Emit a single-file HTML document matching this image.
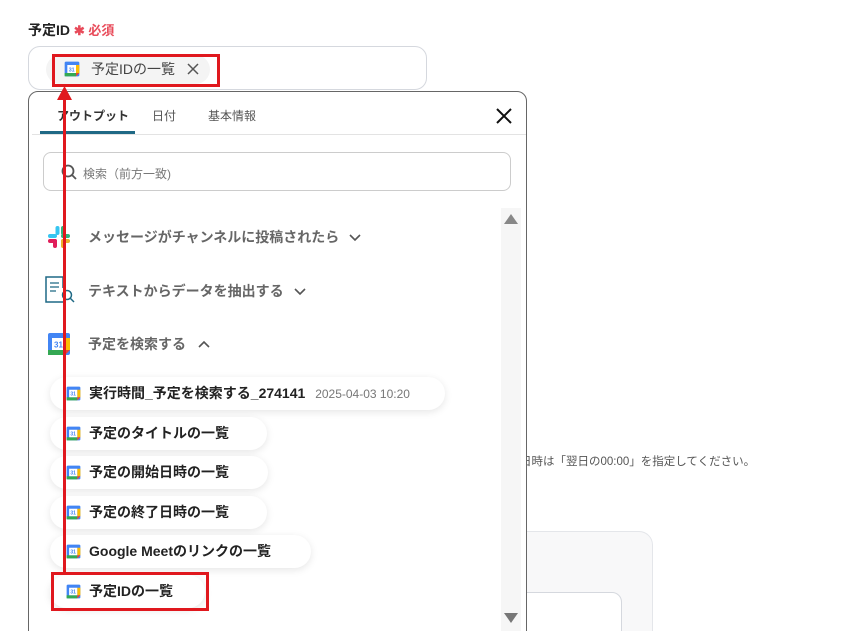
<!DOCTYPE html>
<html><head><meta charset="utf-8"><style>
*{box-sizing:border-box;margin:0;padding:0}
html,body{width:846px;height:631px;overflow:hidden}
body{background:#fff;font-family:"Liberation Sans","Noto Sans CJK JP",sans-serif;position:relative;color:#333}
.a{position:absolute}
.t{white-space:nowrap}
.pill{position:absolute;left:50px;height:33px;border-radius:17px;background:#fff;box-shadow:0 2px 8px rgba(0,0,0,0.10);font-size:14px;font-weight:bold;color:#222;line-height:33px;padding-left:39px;white-space:nowrap}
.grp{position:absolute;left:88px;font-size:14px;color:#666;font-weight:bold;white-space:nowrap}
.grp svg{margin-left:10px;vertical-align:middle}
</style></head><body>
<svg width="0" height="0" style="position:absolute"><defs>
<symbol id="cal" viewBox="0 0 24 24">
<rect x="1" y="1" width="22" height="22" rx="2" fill="#4285f4"/>
<rect x="1" y="18" width="17" height="5" fill="#34a853"/>
<rect x="18" y="6" width="5" height="12" fill="#fbbc04"/>
<polygon points="18,18 23,18 18,23" fill="#ea4335"/>
<rect x="5" y="6" width="13" height="12" fill="#fff"/>
<text x="11.5" y="15.5" font-size="8" fill="#4285f4" text-anchor="middle" font-family="Liberation Sans" font-weight="bold">31</text>
</symbol></defs></svg>

<div class="a t" style="left:28px;top:20px;font-size:14px;font-weight:bold;color:#222">予定ID <span style="color:#e84b5a;font-size:13px">✱ 必須</span></div>
<div class="a" style="left:28px;top:46px;width:399px;height:44px;border:1px solid #d5d8de;border-radius:12px"></div>
<div class="a" style="left:46px;top:55px;width:164px;height:29px;border-radius:15px;background:#f4f4f4"></div>
<svg class="a" style="left:64px;top:61px" width="16" height="16"><use href="#cal"/></svg>
<div class="a t" style="left:91px;top:59px;font-size:14px;color:#444">予定IDの一覧</div>
<svg class="a" style="left:186px;top:62px" width="14" height="14"><path d="M2 2L12 12M12 2L2 12" stroke="#555" stroke-width="1.5"/></svg>

<div class="a t" style="left:497px;top:453px;font-size:11.5px;color:#555">終了日時は「翌日の00:00」を指定してください。</div>
<div class="a" style="left:400px;top:531px;width:253px;height:130px;border:1px solid #e4e6ea;border-radius:14px;background:#f8f8f9"></div>
<div class="a" style="left:420px;top:592px;width:202px;height:60px;border:1px solid #d5d8de;border-radius:10px;background:#fff"></div>

<div class="a" style="left:28px;top:91px;width:499px;height:560px;border:1px solid #666;border-radius:10px;background:#fff;overflow:hidden">
 <div class="a t" style="left:28px;top:15px;font-size:12px;font-weight:bold;color:#333">アウトプット</div>
 <div class="a t" style="left:123px;top:15px;font-size:12px;color:#555">日付</div>
 <div class="a t" style="left:179px;top:15px;font-size:12px;color:#555">基本情報</div>
 <div class="a" style="left:11px;top:39px;width:95px;height:3px;background:#1f6985"></div>
 <div class="a" style="left:3px;top:42px;width:495px;height:1px;background:#e3e3e3"></div>
 <svg class="a" style="left:466px;top:15px" width="18" height="18"><path d="M2 2L16 16M16 2L2 16" stroke="#111" stroke-width="2"/></svg>
 <div class="a" style="left:14px;top:60px;width:468px;height:39px;border:1px solid #ccc;border-radius:8px"></div>
 <svg class="a" style="left:32px;top:72px" width="16" height="16"><circle cx="7" cy="7" r="5.5" fill="none" stroke="#555" stroke-width="1.8"/><path d="M11 11L15 15" stroke="#555" stroke-width="1.8"/></svg>
 <div class="a t" style="left:54px;top:73px;font-size:12px;color:#777">検索（前方一致)</div>
 <div class="a" style="left:472px;top:116px;width:20px;height:450px;background:#f6f6f6"></div>
 <svg class="a" style="left:475px;top:121px" width="14" height="12"><polygon points="7,1 14,11 0,11" fill="#888"/></svg>
 <svg class="a" style="left:475px;top:520px" width="14" height="12"><polygon points="0,1 14,1 7,11" fill="#777"/></svg>
</div>

<svg class="a" style="left:47px;top:225px" width="24" height="24" viewBox="0 0 24 24">
<rect x="1" y="9" width="9" height="4" rx="2" fill="#36c5f0"/><rect x="8.5" y="1" width="4" height="9" rx="2" fill="#36c5f0"/>
<rect x="14" y="1" width="4" height="9" rx="2" fill="#2eb67d"/><rect x="14" y="9" width="9" height="4" rx="2" fill="#2eb67d"/>
<rect x="14" y="14" width="9" height="4" rx="2" fill="#ecb22e"/><rect x="14" y="14" width="4" height="9" rx="2" fill="#ecb22e"/>
<rect x="1" y="14" width="9" height="4" rx="2" fill="#e01e5a"/><rect x="6" y="14" width="4" height="9" rx="2" fill="#e01e5a"/>
</svg>
<div class="grp" style="top:227px">メッセージがチャンネルに投稿されたら<svg width="12" height="10"><path d="M1 2L6 7L11 2" fill="none" stroke="#555" stroke-width="1.6"/></svg></div>

<svg class="a" style="left:45px;top:276px" width="30" height="28" viewBox="0 0 30 28"><path d="M18 26H1V1H18V12" fill="none" stroke="#1f6985" stroke-width="1.5"/><path d="M5 7H14M5 11H14M5 15H11" stroke="#1f6985" stroke-width="1.3"/><circle cx="22" cy="19" r="4.5" fill="#fff" stroke="#1f6985" stroke-width="1.5"/><path d="M25 22L29 26" stroke="#1f6985" stroke-width="1.5"/></svg>
<div class="grp" style="top:281px">テキストからデータを抽出する<svg width="12" height="10"><path d="M1 2L6 7L11 2" fill="none" stroke="#555" stroke-width="1.6"/></svg></div>

<svg class="a" style="left:47px;top:332px" width="24" height="24"><use href="#cal"/></svg>
<div class="grp" style="top:334px">予定を検索する</div>
<svg class="a" style="left:198px;top:339px" width="12" height="10"><path d="M1 8L6 3L11 8" fill="none" stroke="#555" stroke-width="1.6"/></svg>

<div class="pill" style="top:377px;width:395px">実行時間_予定を検索する_274141 <span style="font-weight:normal;color:#777;font-size:12px;margin-left:6px">2025-04-03 10:20</span></div>
<div class="pill" style="top:417px;width:217px">予定のタイトルの一覧</div>
<div class="pill" style="top:456px;width:218px">予定の開始日時の一覧</div>
<div class="pill" style="top:496px;width:217px">予定の終了日時の一覧</div>
<div class="pill" style="top:535px;width:261px">Google Meetのリンクの一覧</div>
<div class="pill" style="top:575px;width:155px">予定IDの一覧</div>
<svg class="a" style="left:66px;top:386px" width="15" height="15"><use href="#cal"/></svg>
<svg class="a" style="left:66px;top:426px" width="15" height="15"><use href="#cal"/></svg>
<svg class="a" style="left:66px;top:465px" width="15" height="15"><use href="#cal"/></svg>
<svg class="a" style="left:66px;top:505px" width="15" height="15"><use href="#cal"/></svg>
<svg class="a" style="left:66px;top:544px" width="15" height="15"><use href="#cal"/></svg>
<svg class="a" style="left:66px;top:584px" width="15" height="15"><use href="#cal"/></svg>

<div class="a" style="left:52px;top:54px;width:168px;height:33px;border:3px solid #e0181e"></div>
<div class="a" style="left:51px;top:572px;width:158px;height:39px;border:3px solid #e0181e"></div>
<div class="a" style="left:63px;top:98px;width:3px;height:476px;background:#e0181e"></div>
<svg class="a" style="left:57px;top:86px" width="15" height="14"><polygon points="7.5,0 15,14 0,14" fill="#e0181e"/></svg>
</body></html>
